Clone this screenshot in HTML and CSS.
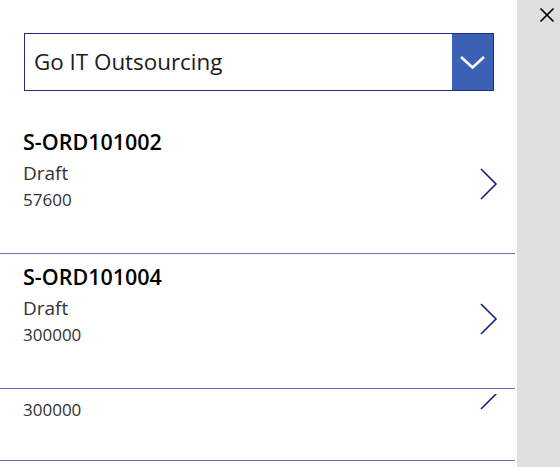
FILE: index.html
```html
<!DOCTYPE html>
<html lang="en">
<head>
<meta charset="utf-8">
<title>Orders</title>
<link rel="stylesheet" href="styles.css">
</head>
<body>
<div class="app">
  <main class="panel">
    <div class="header">
      <div class="dropdown">
        <span class="dropdown-value">Go IT Outsourcing</span>
        <span class="dropdown-btn">
          <svg width="41" height="56" viewBox="0 0 41 56"><polyline points="9,23 20.5,33.5 32,23" fill="none" stroke="#fff" stroke-width="2.6"/></svg>
        </span>
      </div>
    </div>
    <div class="list">
      <div class="row">
        <div class="row-inner">
          <div class="texts">
            <div class="title">S-ORD101002</div>
            <div class="status">Draft</div>
            <div class="amount">57600</div>
          </div>
          <svg class="chev" width="22" height="36" viewBox="0 0 22 36"><polyline points="3,3 18,18 3,33" fill="none" stroke="#13207a" stroke-width="1.6"/></svg>
        </div>
      </div>
      <div class="row">
        <div class="row-inner">
          <div class="texts">
            <div class="title">S-ORD101004</div>
            <div class="status">Draft</div>
            <div class="amount">300000</div>
          </div>
          <svg class="chev" width="22" height="36" viewBox="0 0 22 36"><polyline points="3,3 18,18 3,33" fill="none" stroke="#13207a" stroke-width="1.6"/></svg>
        </div>
      </div>
      <div class="row row-partial">
        <div class="clip">
          <div class="row-inner">
            <div class="texts texts-partial">
              <div class="amount">300000</div>
            </div>
            <svg class="chev" width="22" height="36" viewBox="0 0 22 36"><polyline points="3,3 18,18 3,33" fill="none" stroke="#13207a" stroke-width="1.6"/></svg>
          </div>
        </div>
      </div>
    </div>
  </main>
  <aside class="side">
    <svg class="close" width="16" height="16" viewBox="0 0 16 16"><path d="M1.5 1.5 L14.5 14.5 M14.5 1.5 L1.5 14.5" stroke="#000" stroke-width="1.7" fill="none"/></svg>
  </aside>
</div>
</body>
</html>
```

FILE: styles.css
```css
html, body {
  margin: 0;
  padding: 0;
  background: #ffffff;
}
body {
  font-family: "Open Sans", "Noto Sans", sans-serif;
  color: #000;
}
.app {
  display: flex;
  width: 560px;
  height: 467px;
  overflow: hidden;
}
.panel {
  width: 517px;
  flex: none;
  background: #fff;
}
.header {
  height: 119px;
  padding: 33px 0 0 24px;
  box-sizing: border-box;
}
.dropdown {
  width: 470px;
  height: 58px;
  box-sizing: border-box;
  border: 1px solid #1f2b84;
  display: flex;
  align-items: center;
}
.dropdown-value {
  flex: 1;
  padding-left: 9px;
  font-size: 22.4px;
  color: #1b1b1b;
  line-height: 56px;
}
.dropdown-btn {
  width: 41px;
  height: 56px;
  background: #3b61b5;
  display: block;
}
.dropdown-btn svg { display: block; }
.list {
  width: 515px;
}
.row {
  border-bottom: 1px solid #6673bd;
}
.row-inner {
  display: flex;
  height: 134px;
}
.row-partial {
  height: 72px;
  padding-top: 5px;
  box-sizing: border-box;
}
.clip {
  height: 67px;
  overflow: hidden;
}
.row-partial .row-inner {
  margin-top: -65px;
}
.texts {
  flex: 1;
  padding: 11px 0 0 23px;
}
.texts-partial {
  padding-top: 70px;
}
.title {
  font-size: 21.5px;
  font-weight: 600;
  line-height: 24px;
  color: #000;
}
.status {
  margin-top: 7px;
  font-size: 19px;
  line-height: 24px;
  color: #323130;
}
.amount {
  margin-top: 4px;
  font-size: 17px;
  line-height: 22px;
  color: #323130;
}
.texts-partial .amount {
  margin-top: 0;
}
.chev {
  flex: none;
  margin: 47px 15px 0 0;
  display: block;
}
.side {
  flex: 1;
  background: #dfdfdf;
}
.close {
  display: block;
  margin: 7px 0 0 22px;
}
```
